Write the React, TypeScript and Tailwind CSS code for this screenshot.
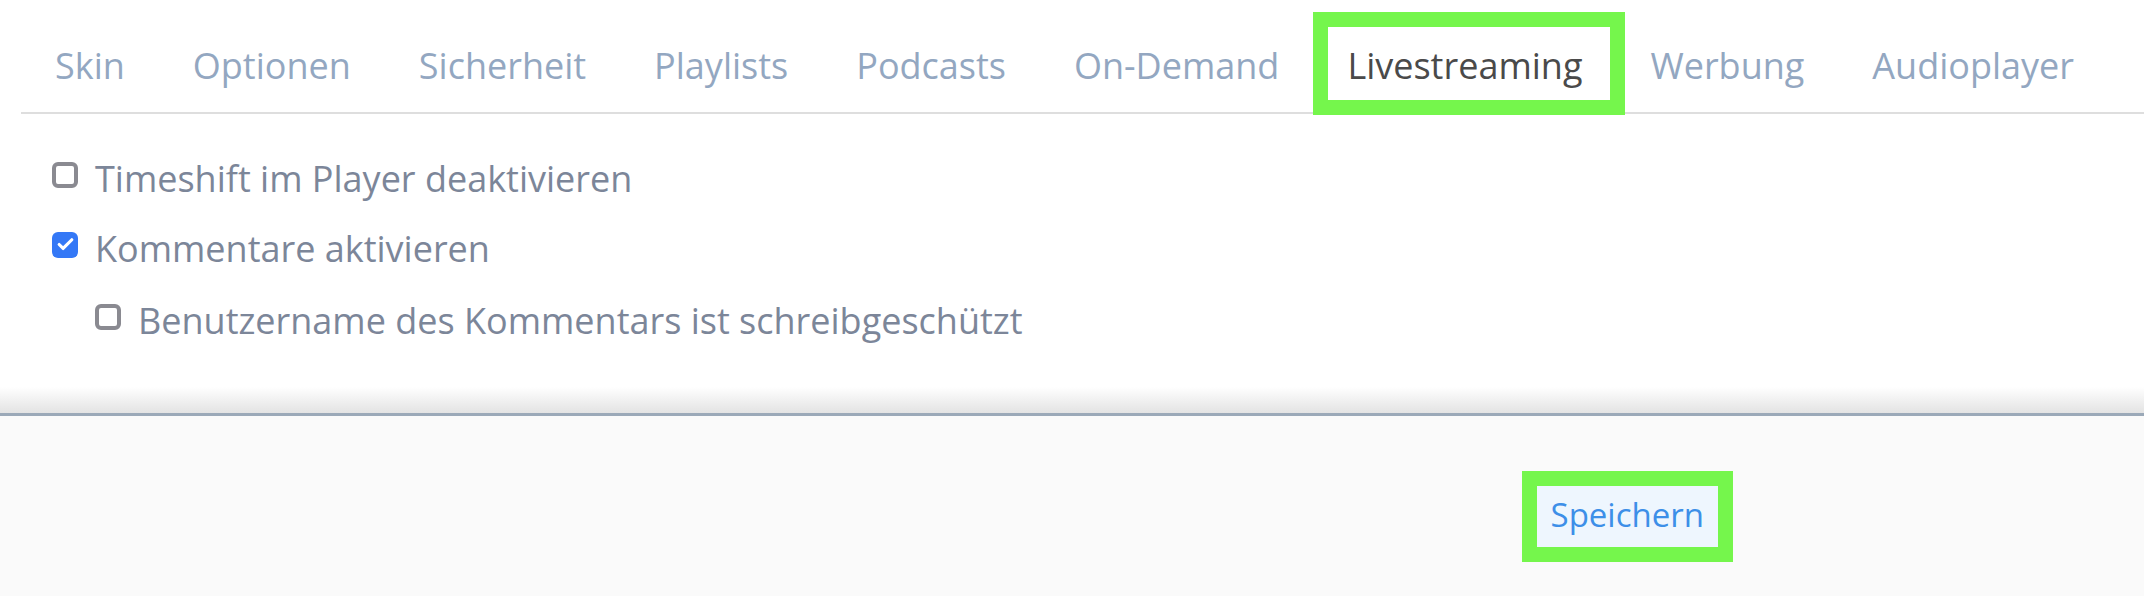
import { Check } from 'lucide-react'

type Tab = { label: string; active?: boolean }

const TABS: Tab[] = [
  { label: 'Skin' },
  { label: 'Optionen' },
  { label: 'Sicherheit' },
  { label: 'Playlists' },
  { label: 'Podcasts' },
  { label: 'On-Demand' },
  { label: 'Livestreaming', active: true },
  { label: 'Werbung' },
  { label: 'Audioplayer' },
]

function Box({ checked }: { checked?: boolean }) {
  if (checked) {
    return (
      <span className="mb-[8px] mr-[17px] flex h-[26px] w-[26px] shrink-0 items-center justify-center rounded-[6px] bg-[#3478f6]">
        <Check size={19} strokeWidth={4} color="#ffffff" />
      </span>
    )
  }
  return (
    <span className="mb-[8px] mr-[17px] block h-[26px] w-[26px] shrink-0 rounded-[6px] border-[4px] border-[#8a8a91] bg-white" />
  )
}

function Row({ label, checked, className }: { label: string; checked?: boolean; className: string }) {
  return (
    <div className={`flex h-[49px] items-center text-[36px] leading-[49px] text-[#7c8699] ${className}`}>
      <Box checked={checked} />
      <span className="whitespace-nowrap">{label}</span>
    </div>
  )
}

export default function App() {
  return (
    <div className="flex h-[596px] w-full flex-col bg-white font-['Open_Sans',sans-serif]">
      <div className="h-[387px] pl-[21px] pt-[12px]">
        <ul className="flex border-b-2 border-[#dedede]">
          {TABS.map((tab) => (
            <li
              key={tab.label}
              className={`relative whitespace-nowrap px-[34px] pb-[22px] pt-[30px] text-[36px] leading-[48px] ${
                tab.active ? 'text-[#4a4a4a]' : 'text-[#93a7c1]'
              }`}
            >
              {tab.label}
              {tab.active && (
                <span className="absolute -bottom-[3px] left-0 -right-[9px] top-0 border-[15px] border-[#75f64c]" />
              )}
            </li>
          ))}
        </ul>

        <div className="pl-[31px] pt-[40px]">
          <Row label="Timeshift im Player deaktivieren" className="" />
          <Row label="Kommentare aktivieren" checked className="mt-[21px]" />
          <Row label="Benutzername des Kommentars ist schreibgeschützt" className="mt-[23px] pl-[43px]" />
        </div>
      </div>

      {/* bottom shadow of the panel */}
      <div className="h-[26px] bg-linear-to-b from-white to-[#e3e3e3]" />
      <div className="h-[3px] bg-[#9ba9b8]" />

      <div className="flex flex-1 justify-end bg-[#fafafa] pr-[411px] pt-[55px]">
        <div className="h-fit border-[15px] border-[#75f64c]">
          <button className="flex h-[61px] items-center bg-[#eef6fe] px-[14px] pb-[4px] text-[33px] leading-[45px] text-[#3d8fe8]">
            Speichern
          </button>
        </div>
      </div>
    </div>
  )
}
